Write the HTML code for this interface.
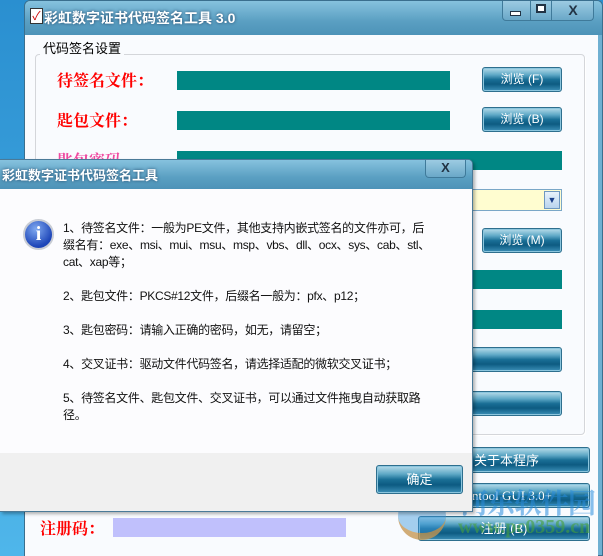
<!DOCTYPE html>
<html><head><meta charset="utf-8"><style>
*{margin:0;padding:0;box-sizing:border-box}
body{width:603px;height:556px;overflow:hidden;position:relative;background:linear-gradient(#2a8fd0,#4fb6ea);font-family:"Liberation Sans","Noto Sans CJK SC",sans-serif}
.abs{position:absolute}
.tb{background:linear-gradient(#86c2de,#5a9fc2 60%,#4d93b8)}
.btn{position:absolute;border:1px solid #2e6f8e;border-radius:3px;background:linear-gradient(#b8dcea 0%,#5ea8c6 30%,#1a6f96 50%,#0d5b82 70%,#3c90b8 100%);color:#fff;font-size:12px;text-align:center;box-shadow:inset 0 0 0 1px #8cc6de}
.teal{position:absolute;background:#008784}
.red{position:absolute;color:#f00;font-size:16px;font-weight:bold;font-family:"Noto Serif CJK SC",serif;line-height:20px}
.p{font-size:12px;line-height:17px;color:#111;margin-bottom:17px}
</style></head><body>
<div class="abs" style="left:24px;top:0;width:579px;height:556px;background:#6fb0d2;border-radius:6px 6px 0 0;border:1px solid #3a6f8e"></div>
<div class="abs tb" style="left:25px;top:1px;width:577px;height:34px;border-radius:5px 5px 0 0"></div>
<div class="abs" style="left:30px;top:8px;width:13px;height:16px;background:#fff;border:1px solid #333;color:#c00;font-size:12px;line-height:14px;text-align:center">✓</div>
<div class="abs" style="left:44px;top:8px;color:#fff;font-size:14px;font-weight:bold;text-shadow:0 0 3px #246">彩虹数字证书代码签名工具 3.0</div>
<div class="abs" style="left:502px;top:1px;width:92px;height:20px;border:1px solid #3f7a9a;border-top:none;border-radius:0 0 4px 4px;background:linear-gradient(#9ccbe2,#6aa8c8)"></div>
<div class="abs" style="left:530px;top:1px;width:22px;height:20px;border-left:1px solid #3f7a9a;border-right:1px solid #3f7a9a"></div>
<div class="abs" style="left:510px;top:11px;width:11px;height:5px;border:1px solid #234;background:#fff"></div>
<div class="abs" style="left:536px;top:4px;width:10px;height:9px;border:2px solid #234;background:#fff"></div>
<div class="abs" style="left:552px;top:1px;width:42px;height:20px;text-align:center;color:#234;font-weight:bold;font-size:14px;line-height:18px">X</div>
<div class="abs" style="left:25px;top:35px;width:573px;height:521px;background:#f9fbfe"></div>
<div class="abs" style="left:35px;top:54px;width:550px;height:381px;border:1px solid #d4d6da;border-radius:4px;box-shadow:1px 1px 0 #fff"></div>
<div class="abs" style="left:40px;top:38px;background:#f9fbfe;font-size:13px;padding:0 3px;color:#000">代码签名设置</div>
<div class="red" style="left:57px;top:70px">待签名文件：</div>
<div class="red" style="left:57px;top:110px">匙包文件：</div>
<div class="red" style="left:57px;top:150px;color:#f04aa0">匙包密码</div>
<div class="teal" style="left:177px;top:71px;width:273px;height:19px"></div>
<div class="teal" style="left:177px;top:111px;width:273px;height:19px"></div>
<div class="teal" style="left:177px;top:151px;width:385px;height:19px"></div>
<div class="btn" style="left:482px;top:67px;width:80px;height:25px;line-height:23px">浏览 (F)</div>
<div class="btn" style="left:482px;top:107px;width:80px;height:25px;line-height:23px">浏览 (B)</div>
<div class="abs" style="left:460px;top:189px;width:102px;height:22px;background:#fffdd0;border:1px solid #7aa7c7"></div>
<div class="abs" style="left:544px;top:191px;width:16px;height:18px;background:linear-gradient(#e8f2fb,#b9d4ee);border:1px solid #6f98c0;color:#1b3f8a;font-size:9px;text-align:center;line-height:16px">▼</div>
<div class="btn" style="left:482px;top:228px;width:80px;height:25px;line-height:23px">浏览 (M)</div>
<div class="teal" style="left:460px;top:270px;width:102px;height:19px"></div>
<div class="teal" style="left:460px;top:310px;width:102px;height:19px"></div>
<div class="btn" style="left:440px;top:347px;width:122px;height:25px"></div>
<div class="btn" style="left:440px;top:391px;width:122px;height:25px"></div>
<div class="btn" style="left:455px;top:447px;width:135px;height:26px;line-height:25px;text-align:left;padding-left:18px;font-size:13px">关于本程序</div>
<div class="btn" style="left:455px;top:483px;width:135px;height:25px;line-height:24px;text-align:left;padding-left:16px;font-family:'Liberation Serif',serif;font-size:13px">ntool GUI 3.0+</div>
<div class="btn" style="left:418px;top:516px;width:172px;height:25px;line-height:24px;font-size:13px">注册 (B)</div>
<div class="red" style="left:40px;top:518px">注册码：</div>
<div class="abs" style="left:113px;top:518px;width:233px;height:19px;background:#c0c0fc"></div>
<div class="abs" style="left:460px;top:482px;color:rgba(40,140,220,.55);font-size:28px;font-weight:bold;font-family:'Noto Serif CJK SC',serif;letter-spacing:-1px">河东软件园</div>
<div class="abs" style="left:458px;top:516px;color:rgba(70,160,60,.6);font-size:20px;font-weight:bold;font-family:'Liberation Serif',serif">www.pc0359.cn</div>
<div class="abs" style="left:398px;top:492px;width:48px;height:48px;border-radius:50%;background:rgba(60,150,220,.45);border-bottom:7px solid rgba(240,150,40,.6)"></div>
<!-- dialog -->
<div class="abs" style="left:0;top:159px;width:473px;height:353px;background:#f0f0f0;border:1px solid #4a7a98;border-left:none;border-radius:0 5px 0 0;box-shadow:2px 2px 3px rgba(0,0,0,.3)"></div>
<div class="abs tb" style="left:0;top:160px;width:472px;height:29px;border-radius:0 4px 0 0"></div>
<div class="abs" style="left:2px;top:165px;color:#fff;font-size:13px;font-weight:bold;text-shadow:0 0 3px #246">彩虹数字证书代码签名工具</div>
<div class="abs" style="left:425px;top:160px;width:41px;height:18px;border:1px solid #3f7a9a;border-top:none;border-radius:0 0 4px 4px;background:linear-gradient(#9ccbe2,#6aa8c8);text-align:center;color:#234;font-weight:bold;font-size:13px;line-height:16px">X</div>
<div class="abs" style="left:0;top:189px;width:472px;height:264px;background:#fcfcfe"></div>
<div class="abs" style="left:23px;top:219px;width:31px;height:31px;border-radius:50%;background:radial-gradient(circle at 40% 30%,#7fa9f0,#1d45b8 70%);border:2px solid #c8ccd4;color:#fff;font-weight:bold;font-size:20px;text-align:center;line-height:27px;font-family:'Liberation Serif',serif">i</div>
<div class="abs" style="left:63px;top:220px;width:368px;letter-spacing:-0.3px">
<div class="p">1、待签名文件：一般为PE文件，其他支持内嵌式签名的文件亦可，后缀名有：exe、msi、mui、msu、msp、vbs、dll、ocx、sys、cab、stl、cat、xap等；</div>
<div class="p">2、匙包文件：PKCS#12文件，后缀名一般为：pfx、p12；</div>
<div class="p">3、匙包密码：请输入正确的密码，如无，请留空；</div>
<div class="p">4、交叉证书：驱动文件代码签名，请选择适配的微软交叉证书；</div>
<div class="p">5、待签名文件、匙包文件、交叉证书，可以通过文件拖曳自动获取路径。</div>
</div>
<div class="btn" style="left:376px;top:465px;width:87px;height:29px;line-height:28px;font-size:13px">确定</div>
</body></html>
